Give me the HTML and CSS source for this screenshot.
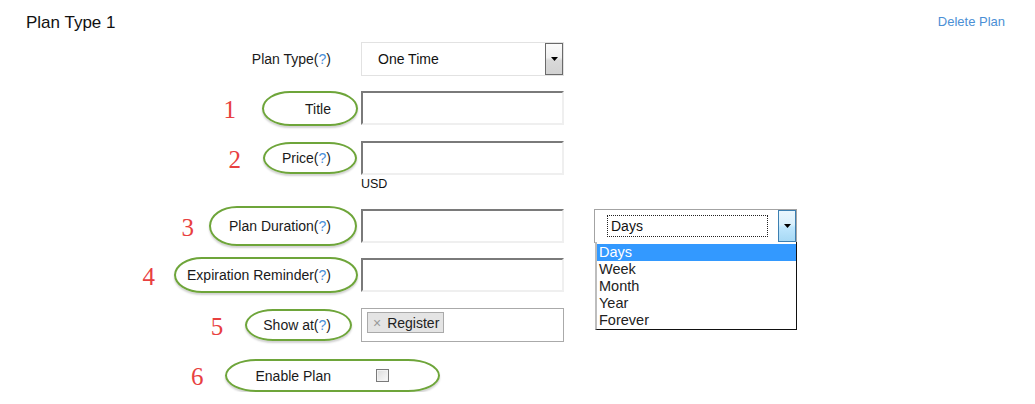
FILE: index.html
```html
<!DOCTYPE html>
<html>
<head>
<meta charset="utf-8">
<link rel="stylesheet" href="styles.css">
</head>
<body>
<div class="page">
  <div class="header">
    <h2 class="plan-title">Plan Type 1</h2>
    <a class="delete-link">Delete Plan</a>
  </div>

  <div class="row row-first">
    <div class="label"><span class="plain-label">Plan Type(<span class="help">?</span>)</span></div>
    <div class="field">
      <div class="select">
        <span class="select-text">One Time</span>
        <span class="select-btn"><svg width="7" height="4" viewBox="0 0 7 4"><path d="M0 0h7L3.5 4z" fill="#000"/></svg></span>
      </div>
    </div>
  </div>

  <div class="row row-gap15">
    <div class="label"><span class="num num-wide">1</span><span class="oval oval-title">Title</span></div>
    <div class="field"><input class="text-input" type="text"></div>
  </div>

  <div class="row row-gap16 row-price">
    <div class="label"><span class="num">2</span><span class="oval oval-price">Price(<span class="help">?</span>)</span></div>
    <div class="field"><input class="text-input" type="text"></div>
    <div class="usd">USD</div>
  </div>

  <div class="row row-gap17">
    <div class="label"><span class="num num-narrow">3</span><span class="oval oval-duration">Plan Duration(<span class="help">?</span>)</span></div>
    <div class="field"><input class="text-input" type="text"></div>
    <div class="field dur-field">
      <div class="select select-open">
        <span class="select-text"><span class="focus-box">Days</span></span>
        <span class="select-btn select-btn-blue"><svg width="7" height="4" viewBox="0 0 7 4"><path d="M0 0h7L3.5 4z" fill="#000"/></svg></span>
      </div>
      <ul class="dropdown">
        <li class="opt opt-active">Days</li>
        <li class="opt">Week</li>
        <li class="opt">Month</li>
        <li class="opt">Year</li>
        <li class="opt">Forever</li>
      </ul>
    </div>
  </div>

  <div class="row row-gap15">
    <div class="label"><span class="num num-mid">4</span><span class="oval oval-exp">Expiration Reminder(<span class="help">?</span>)</span></div>
    <div class="field"><input class="text-input" type="text"></div>
  </div>

  <div class="row row-gap16">
    <div class="label"><span class="num">5</span><span class="oval oval-show">Show at(<span class="help">?</span>)</span></div>
    <div class="field">
      <div class="multi">
        <span class="tag"><span class="tag-x">×</span>Register</span>
      </div>
    </div>
  </div>

  <div class="row row-gap16">
    <div class="label"><span class="num">6</span><span class="oval oval-enable">Enable Plan</span></div>
    <div class="field"><input class="checkbox" type="checkbox"></div>
  </div>
</div>
</body>
</html>
```

FILE: styles.css
```css
* { box-sizing: border-box; }

body {
  margin: 0;
  background: #fff;
  font-family: "Liberation Sans", Arial, sans-serif;
  color: #1a1a1a;
}

.page {
  width: 1035px;
}

.header {
  display: flex;
  justify-content: space-between;
  align-items: center;
  margin-top: 13px;
  height: 20px;
  padding: 0 30px 0 26px;
}

.plan-title {
  margin: 0;
  font-size: 17px;
  font-weight: normal;
  line-height: 20px;
  color: #111;
}

.delete-link {
  font-size: 13px;
  color: #4b8fd5;
  line-height: 16px;
  margin-top: -2px;
}

.row {
  display: grid;
  grid-template-columns: 331px 203px 203px;
  grid-template-rows: 34px;
  column-gap: 30px;
  align-items: center;
}

.row-first { margin-top: 9px; }
.row-gap15 { margin-top: 15px; }
.row-gap16 { margin-top: 16px; }
.row-gap17 { margin-top: 17px; }

.row-price { grid-template-rows: 34px auto; }

.label {
  display: flex;
  justify-content: flex-end;
  align-items: center;
  height: 34px;
  font-size: 14px;
  line-height: 16px;
}

.plain-label { white-space: nowrap; }

.help { color: #4a90d9; }

.num {
  font-family: "Liberation Serif", "Times New Roman", serif;
  font-size: 25px;
  line-height: 25px;
  color: #e8403f;
  margin-right: 22px;
  padding-top: 3px;
}
.num-wide { margin-right: 26px; }
.num-narrow { margin-right: 15px; }
.num-mid { margin-right: 19px; }

.oval {
  display: inline-block;
  white-space: nowrap;
  border: 2px solid #6ea53a;
  border-radius: 28px / 50%;
  box-shadow: 0 2px 2px rgba(0, 0, 0, 0.18);
  padding-right: 25px;
  margin-right: -27px;
}

.oval-title { padding: 8px 25px 7px 41px; }
.oval-price { padding: 6px 24px 6px 17px; margin-right: -26px; }
.oval-duration { padding: 10px 24px 10px 18px; margin-right: -26px; }
.oval-exp { padding: 8px 25px 8px 11px; }
.oval-show { padding: 6px 19px 6px 16px; margin-right: -21px; }
.oval-enable { padding: 7px 107px 6px 28px; margin-right: -109px; border-radius: 32px / 50%; }

.field {
  display: flex;
  align-items: center;
  height: 34px;
}

.text-input {
  width: 203px;
  height: 34px;
  margin: 0;
  padding: 0 4px;
  border-top: 2px solid #7a7a7a;
  border-left: 2px solid #7a7a7a;
  border-right: 2px solid #efefef;
  border-bottom: 2px solid #efefef;
  background: #fff;
  outline: none;
}

.usd {
  grid-column: 2;
  grid-row: 2;
  font-size: 12.5px;
  line-height: 15px;
  margin-top: 2px;
  color: #111;
}

.select {
  display: flex;
  width: 203px;
  height: 34px;
  border: 1px solid #e2e2e2;
  background: #fff;
}

.select-text {
  flex: 1;
  display: flex;
  align-items: center;
  padding-left: 16px;
  font-size: 14px;
  color: #111;
}

.select-btn {
  width: 18px;
  margin: 0;
  border: 1px solid #6a6a6a;
  background: linear-gradient(#fbfbfb 0%, #f0f0f0 45%, #d9d9d9 55%, #d2d2d2 100%);
  display: flex;
  align-items: center;
  justify-content: center;
}

.dur-field {
  position: relative;
}

.select-open {
  border: 1px solid #a3a3a3;
}

.select-open .select-text {
  padding: 5px 10px 5px 12px;
}

.focus-box {
  display: flex;
  align-items: center;
  width: 100%;
  height: 22px;
  border: 1px dotted #222;
  padding-left: 3px;
  font-size: 14px;
}

.select-btn-blue {
  border: 1px solid #3c7fb1;
  background: linear-gradient(#eaf6fd 0%, #d9f0fc 45%, #bee6fd 55%, #a7d9f5 100%);
}

.dropdown {
  position: absolute;
  top: 33px;
  left: 1px;
  width: 202px;
  margin: 0;
  padding: 2px 0 0 0;
  list-style: none;
  background: #fff;
  border-left: 2px solid #bdbdbd;
  border-right: 1px solid #111;
  border-bottom: 1px solid #111;
  font-size: 14.5px;
  z-index: 5;
}

.opt {
  height: 17px;
  line-height: 17px;
  padding-left: 2px;
  color: #222;
}

.opt-active {
  background: #3399ff;
  color: #fff;
}

.multi {
  width: 203px;
  height: 34px;
  border: 1px solid #aaa;
  padding: 3px 5px;
  background: #fff;
}

.tag {
  display: inline-flex;
  align-items: center;
  height: 21px;
  padding: 0 4px 0 5px;
  background: #e4e4e4;
  border: 1px solid #aaa;
  font-size: 14px;
  color: #222;
}

.tag-x {
  color: #999;
  font-size: 14px;
  margin-right: 6px;
}

.checkbox {
  appearance: none;
  -webkit-appearance: none;
  width: 13px;
  height: 13px;
  margin: 0 0 0 15px;
  border: 1px solid #7a7a7a;
  background: linear-gradient(135deg, #dcdcdc, #fbfbfb);
  box-shadow: inset 0 0 0 1px #f2f2f2;
  position: relative;
  z-index: 2;
}
```
